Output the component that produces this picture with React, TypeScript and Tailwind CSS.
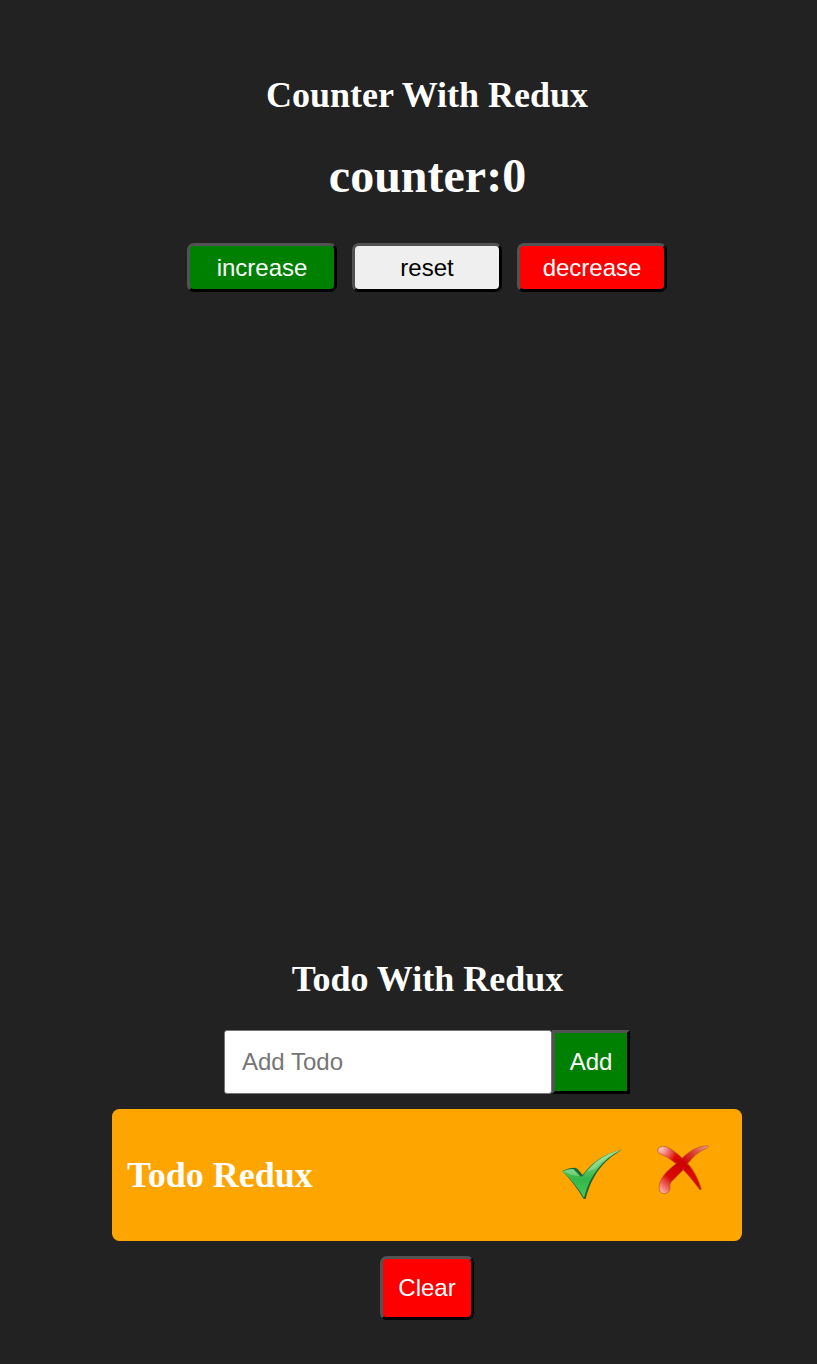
import { useState } from "react";

const bevel =
  "border-[3px] border-t-[#525252] border-l-[#525252] border-b-black border-r-black font-['Liberation_Sans',Arial,sans-serif] text-[24px] leading-[28px]";

function CheckIcon() {
  return (
    <svg width="85" height="75" viewBox="0 0 255 225" className="block">
      <defs>
        <linearGradient id="leaf" gradientUnits="userSpaceOnUse" x1="120" y1="45" x2="120" y2="190">
          <stop offset="0" stopColor="#8fdc8e" />
          <stop offset="0.3" stopColor="#6ccb70" />
          <stop offset="0.6" stopColor="#35b74a" />
          <stop offset="1" stopColor="#46ca5a" />
        </linearGradient>
      </defs>
      <path d="M37 108C50 101 62 98 75 98L82 101L98 120C125 83 163 55 215 45C155 79 124 127 107 192H101C84 162 63 135 37 108Z" fill="#1c6535" />
      <path d="M37 109C49 103 60 101 71 102L93 125C96 125 98 123 100 120C126 84 163 55 213 45C157 73 119 121 102 188C86 161 64 134 37 109Z" fill="url(#leaf)" />
      <path d="M42 109C52 104 61 103 70 104L88 123C70 122 56 117 42 109Z" fill="#b9eab4" opacity="0.4" />
      <path d="M112 110C133 81 162 60 200 50C170 66 149 84 136 101Z" fill="#c8f0c5" opacity="0.35" />
    </svg>
  );
}

function CrossIcon() {
  return (
    <svg width="65" height="75" viewBox="0 0 195 225" className="block">
      <defs>
        <radialGradient id="upperShine" gradientUnits="userSpaceOnUse" cx="48" cy="41" r="50">
          <stop offset="0" stopColor="#ffc7c1" />
          <stop offset="0.45" stopColor="#f2766d" />
          <stop offset="1" stopColor="#dc0800" />
        </radialGradient>
        <linearGradient id="stroke" gradientUnits="userSpaceOnUse" x1="186" y1="34" x2="55" y2="174">
          <stop offset="0" stopColor="#ef9389" />
          <stop offset="0.22" stopColor="#dc4034" />
          <stop offset="0.45" stopColor="#cb0000" />
          <stop offset="0.76" stopColor="#d90b05" />
          <stop offset="0.9" stopColor="#ee655c" />
          <stop offset="1" stopColor="#ffaaa0" />
        </linearGradient>
      </defs>
      <g stroke="#b55a1c" strokeWidth="2" strokeLinejoin="round">
        <path d="M38 45C39 36 54 31 66 36C83 44 99 58 117 74C144 99 160 132 169 163L165 165C146 140 127 115 105 96C87 81 68 65 50 59C40 55 36 50 38 45Z" fill="url(#upperShine)" />
        <path d="M188 32C193 35 187 39 178 43C153 55 137 73 120 98C100 124 73 139 75 152C77 168 68 176 59 176C45 176 41 164 43 151C47 124 72 101 101 80C130 48 156 34 188 32Z" fill="url(#stroke)" />
      </g>
      <path d="M91 72L109 71L137 101L123 108L99 88Z" fill="#cd0500" />
    </svg>
  );
}

export default function App() {
  const [count, setCount] = useState(0);
  const [draft, setDraft] = useState("");
  const [todos, setTodos] = useState(["Todo Redux"]);
  const addTodo = () => {
    if (draft.trim()) {
      setTodos([...todos, draft.trim()]);
      setDraft("");
    }
  };

  return (
    <main className="min-h-[1364px] bg-[#222222] pt-[74px] pr-[75px] pl-[112px] font-['Liberation_Serif','Times_New_Roman',serif] text-white">
      <section className="flex h-[884px] flex-col items-center">
        <h2 className="text-[36px] leading-[42px] font-bold">Counter With Redux</h2>
        <h1 className="mt-8 pl-px text-[48px] leading-[56px] font-bold">counter:{count}</h1>
        <div className="mt-[39px] flex gap-[15px]">
          <button onClick={() => setCount(count + 1)} className={`${bevel} h-[49px] w-[150px] rounded-[7px] bg-[#008000]`}>increase</button>
          <button onClick={() => setCount(0)} className={`${bevel} h-[49px] w-[150px] rounded-[7px] bg-[#efefef] text-black`}>reset</button>
          <button onClick={() => setCount(count - 1)} className={`${bevel} h-[49px] w-[150px] rounded-[7px] bg-[#ff0000]`}>decrease</button>
        </div>
      </section>
      <section className="flex flex-col items-center">
        <h2 className="pl-px text-[36px] leading-[42px] font-bold">Todo With Redux</h2>
        <div className="mt-[30px] flex h-16">
          <input
            value={draft}
            onChange={(e) => setDraft(e.target.value)}
            placeholder="Add Todo"
            className="h-16 w-[328px] rounded-[3px] border border-[#767676] bg-white pr-4 pl-[17px] font-['Liberation_Sans',Arial,sans-serif] text-[24px] text-black placeholder:text-[#757575]"
          />
          <button onClick={addTodo} className={`${bevel} w-[78px] bg-[#008000]`}>Add</button>
        </div>
        {todos.map((todo, i) => (
          <div key={i} className="mt-[15px] flex h-[132px] w-full rounded-[7.5px] bg-[#ffa500] pl-[15px]">
            <h2 className="mt-[45px] grow text-[36px] leading-[42px] font-bold">{todo}</h2>
            <button aria-label="Complete" className="mt-[26px] mr-[10px] h-[75px] w-[85px]"><CheckIcon /></button>
            <button aria-label="Remove" onClick={() => setTodos(todos.filter((_, n) => n !== i))} className="mt-[26px] mr-8 h-[75px] w-[65px]"><CrossIcon /></button>
          </div>
        ))}
        <button onClick={() => setTodos([])} className={`${bevel} mt-[15px] h-16 w-[94px] rounded-[7px] bg-[#ff0000]`}>Clear</button>
      </section>
    </main>
  );
}
